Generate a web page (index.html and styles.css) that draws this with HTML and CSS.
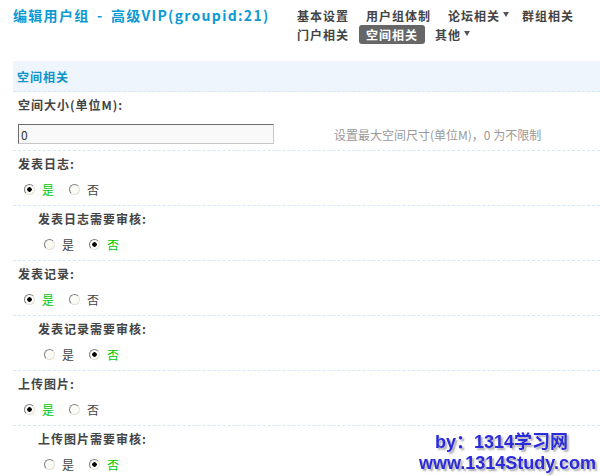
FILE: index.html
```html
<!DOCTYPE html>
<html lang="zh-CN">
<head>
    <meta charset="UTF-8">
    <meta name="viewport" content="width=device-width, initial-scale=1.0">
    <title>编辑用户组 - 高级VIP(groupid:21)</title>
    <link rel="stylesheet" href="styles.css">
</head>
<body>
    <div class="header">
        <h1 class="title">编辑用户组 - 高级VIP(groupid:21)</h1>
        <ul class="tabs">
            <li><a href="#">基本设置</a></li>
            <li><a href="#">用户组体制</a></li>
            <li><a href="#" class="menu">论坛相关</a></li>
            <li><a href="#">群组相关</a></li>
            <li><a href="#">门户相关</a></li>
            <li class="current"><a href="#">空间相关</a></li>
            <li><a href="#" class="menu">其他</a></li>
        </ul>
    </div>

    <div class="section">
        <div class="section-title">空间相关</div>

        <div class="row">
            <div class="label">空间大小(单位M):</div>
            <div class="field">
                <input type="text" class="txt" value="0">
                <span class="tip">设置最大空间尺寸(单位M)，0 为不限制</span>
            </div>
        </div>

        <div class="row">
            <div class="label">发表日志:</div>
            <div class="radios">
                <label class="on"><input type="radio" name="allowblog" checked>是</label>
                <label><input type="radio" name="allowblog">否</label>
            </div>
        </div>
        <div class="row sub">
            <div class="label">发表日志需要审核:</div>
            <div class="radios">
                <label><input type="radio" name="blogmod">是</label>
                <label class="on"><input type="radio" name="blogmod" checked>否</label>
            </div>
        </div>

        <div class="row">
            <div class="label">发表记录:</div>
            <div class="radios">
                <label class="on"><input type="radio" name="allowdoing" checked>是</label>
                <label><input type="radio" name="allowdoing">否</label>
            </div>
        </div>
        <div class="row sub">
            <div class="label">发表记录需要审核:</div>
            <div class="radios">
                <label><input type="radio" name="doingmod">是</label>
                <label class="on"><input type="radio" name="doingmod" checked>否</label>
            </div>
        </div>

        <div class="row">
            <div class="label">上传图片:</div>
            <div class="radios">
                <label class="on"><input type="radio" name="allowupload" checked>是</label>
                <label><input type="radio" name="allowupload">否</label>
            </div>
        </div>
        <div class="row sub">
            <div class="label">上传图片需要审核:</div>
            <div class="radios">
                <label><input type="radio" name="uploadmod">是</label>
                <label class="on"><input type="radio" name="uploadmod" checked>否</label>
            </div>
        </div>
    </div>

    <div class="watermark">
        <div class="wm-by">by：1314学习网</div>
        <div>www.1314Study.com</div>
    </div>
</body>
</html>
```

FILE: styles.css
```css
* {
    margin: 0;
    padding: 0;
    box-sizing: border-box;
}

html, body {
    overflow: hidden;
}

body {
    font-family: "Noto Sans CJK SC", sans-serif;
    font-size: 12px;
    color: #444;
    background: #fff;
}

/* header */
.header {
    display: flex;
    align-items: flex-start;
    padding: 6px 0 0 13px;
}

.title {
    font-size: 14px;
    font-weight: bold;
    letter-spacing: 1.3px;
    word-spacing: 3px;
    line-height: 19px;
    color: #0b9ad3;
}

.tabs {
    list-style: none;
    display: flex;
    flex-wrap: wrap;
    width: 310px;
    margin-left: auto;
}

.tabs li {
    margin-right: 3px;
}

.tabs a {
    display: flex;
    align-items: center;
    height: 19px;
    padding: 0 7px;
    border-radius: 3px;
    font-weight: bold;
    letter-spacing: 1px;
    color: #444;
    text-decoration: none;
}

.tabs .current a {
    background: #666;
    color: #fff;
}

.tabs a.menu {
    padding-right: 3px;
}

.tabs a.menu::after {
    content: '';
    margin: -3px 0 0 3px;
    border-left: 3px solid transparent;
    border-right: 3px solid transparent;
    border-top: 5px solid #555;
}

/* section */
.section {
    margin: 17px 0 0 13px;
}

.section-title {
    height: 31px;
    line-height: 31px;
    padding-left: 4px;
    background: #eff5fd;
    border-bottom: 1px dashed #d5e7f6;
    font-weight: bold;
    letter-spacing: 1px;
    color: #0b93c8;
}

.row {
    padding: 4px 0 7px 5px;
    border-bottom: 1px dashed #d5e7f6;
}

.row.sub {
    padding-left: 25px;
}

.label {
    height: 18px;
    line-height: 18px;
    font-weight: bold;
    letter-spacing: 1px;
}

.field {
    display: grid;
    grid-template-columns: 316px auto;
    align-items: center;
    margin-top: 10px;
    margin-bottom: -1px;
}

.txt {
    width: 256px;
    height: 20px;
    padding: 0 2px;
    border: 1px solid;
    border-color: #6b6b6b #c8c8c8 #c8c8c8 #6b6b6b;
    background: #f9f9f9;
    font-family: "Noto Sans CJK SC", sans-serif;
    font-size: 12px;
    color: #333;
    outline: none;
}

.tip {
    color: #999;
}

.radios {
    display: flex;
    align-items: center;
    height: 18px;
    margin-top: 7px;
    padding-left: 6px;
}

.radios label {
    display: flex;
    align-items: center;
    margin-right: 15px;
    color: #444;
}

.radios label.on {
    color: #00c800;
}

.radios input {
    -webkit-appearance: none;
    appearance: none;
    width: 11px;
    height: 11px;
    margin-right: 7px;
    border: 1px solid;
    border-color: #808080 #e2dfd6 #e2dfd6 #808080;
    border-radius: 50%;
    background: #fbfbf6;
}

.radios input:checked {
    background: radial-gradient(circle, #000 0 2px, #fbfbf6 2.5px);
}

/* watermark */
.watermark {
    position: fixed;
    right: 4px;
    bottom: 2px;
    font-family: "Liberation Sans", "Noto Sans CJK SC", sans-serif;
    font-size: 18px;
    font-weight: bold;
    line-height: 21px;
    text-align: center;
    color: #2b2bdc;
    text-shadow: 2px 2px 2px #aaa;
}

.wm-by {
    padding-right: 12px;
}
```
